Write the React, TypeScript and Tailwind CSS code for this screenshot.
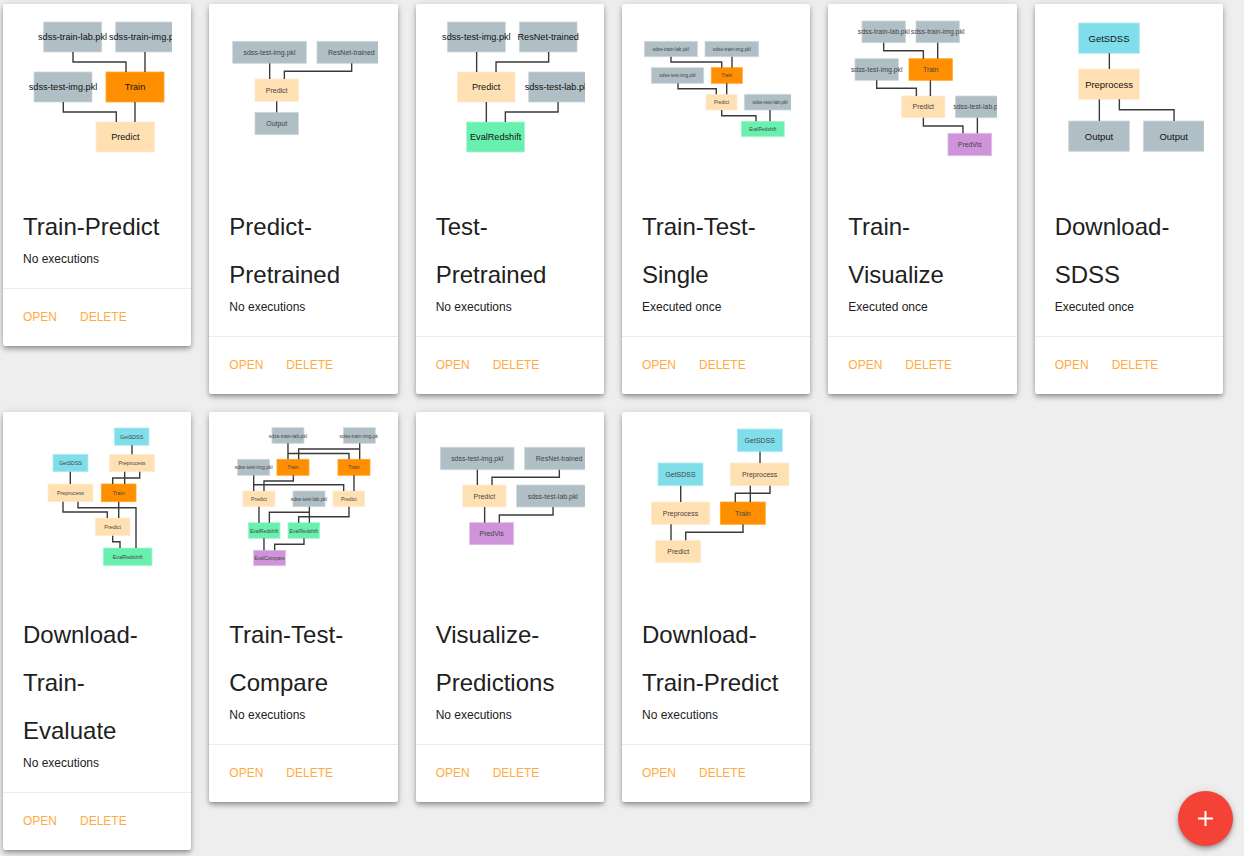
type Kind = 'data' | 'train' | 'step' | 'eval' | 'get' | 'vis';

interface GraphNode {
    x1: number;
    x2: number;
    y1: number;
    y2: number;
    label: string;
    kind: Kind;
    tx?: number; // label centre, where it is not the middle of the box
}

interface Workflow {
    title: string;
    status: string;
    font: number;
    nodes: GraphNode[];
    edges: string[];
}

const kindClass: Record<Kind, string> = {
    data: 'fill-[#b0bec5] stroke-[#cfd8dc]',
    train: 'fill-[#ff8f00] stroke-[#ffa726]',
    step: 'fill-[#ffe0b2] stroke-[#ffecd0]',
    eval: 'fill-[#69f0ae] stroke-[#a5f6ce]',
    get: 'fill-[#80deea] stroke-[#b2ebf2]',
    vis: 'fill-[#ce93d8] stroke-[#e1bee7]',
};

const n = (x1: number, x2: number, y1: number, y2: number, label: string, kind: Kind, tx?: number): GraphNode => ({
    x1, x2, y1, y2, label, kind, tx,
});

// coordinates are page pixels, the viewBox of each card shifts them into place
const workflows: Workflow[] = [
    {
        title: 'Train-Predict',
        status: 'No executions',
        font: 9.13,
        nodes: [
            n(43.7, 101.7, 22, 52, 'sdss-train-lab.pkl', 'data', 72.5),
            n(115.7, 173.7, 22, 52, 'sdss-train-img.pkl', 'data'),
            n(34, 92, 72, 102, 'sdss-test-img.pkl', 'data'),
            n(106, 164, 72, 102, 'Train', 'train'),
            n(96, 154.7, 122, 152, 'Predict', 'step'),
        ],
        edges: [
            '73,52 73,62 126,62 126,72',
            '145,52 145,72',
            '63.3,102 63.3,112 116.3,112 116.3,122',
            '135,102 135,122',
        ],
    },
    {
        title: 'Predict-Pretrained',
        status: 'No executions',
        font: 6.94,
        nodes: [
            n(233, 306.7, 41.3, 63.3, 'sdss-test-img.pkl', 'data'),
            n(317.3, 391, 41.3, 63.3, 'ResNet-trained', 'data', 351.7),
            n(255.3, 298.7, 79, 101.3, 'Predict', 'step'),
            n(255.3, 298.7, 112.3, 134.7, 'Output', 'data'),
        ],
        edges: [
            '270,63.3 270,79',
            '352,63.3 352,71.3 284.7,71.3 284.7,79',
            '277,101.3 277,112.3',
        ],
    },
    {
        title: 'Test-Pretrained',
        status: 'No executions',
        font: 9.13,
        nodes: [
            n(447, 505, 22, 52, 'sdss-test-img.pkl', 'data'),
            n(519, 576.7, 22, 52, 'ResNet-trained', 'data'),
            n(457, 514.7, 72, 102, 'Predict', 'step'),
            n(528.3, 586.3, 72, 102, 'sdss-test-lab.pkl', 'data'),
            n(466.3, 524.3, 122, 152, 'EvalRedshift', 'eval'),
        ],
        edges: [
            '476.3,52 476.3,72',
            '548.3,52 548.3,62 495.7,62 495.7,72',
            '486,102 486,122',
            '557.7,102 557.7,112 505,112 505,122',
        ],
    },
    {
        title: 'Train-Test-Single',
        status: 'Executed once',
        font: 4.85,
        nodes: [
            n(644.3, 697.3, 41.3, 56.7, 'sdss-train-lab.pkl', 'data'),
            n(705, 758.7, 41.3, 56.7, 'sdss-train-img.pkl', 'data'),
            n(651.3, 703.7, 67.7, 83.3, 'sdss-test-img.pkl', 'data'),
            n(711.3, 742.3, 67.7, 83.3, 'Train', 'train'),
            n(706, 737, 94.3, 110, 'Predict', 'step'),
            n(744.3, 796, 94.3, 110, 'sdss-test-lab.pkl', 'data', 770),
            n(741.3, 784.3, 121.3, 136.7, 'EvalRedshift', 'eval'),
        ],
        edges: [
            '671,56.7 671,62 721.7,62 721.7,67.7',
            '732,56.7 732,67.7',
            '678,83.3 678,88.7 716.3,88.7 716.3,94.3',
            '726.7,83.3 726.7,94.3',
            '721.7,110 721.7,115.7 756,115.7 756,121.3',
            '770,110 770,121.3',
        ],
    },
    {
        title: 'Train-Visualize',
        status: 'Executed once',
        font: 6.88,
        nodes: [
            n(862.3, 905.7, 21, 42.7, 'sdss-train-lab.pkl', 'data'),
            n(916.3, 959.7, 21, 42.7, 'sdss-train-img.pkl', 'data'),
            n(855.3, 898.7, 58.7, 80.3, 'sdss-test-img.pkl', 'data'),
            n(909.3, 952.7, 58.7, 80.3, 'Train', 'train'),
            n(902, 945.3, 96, 117.7, 'Predict', 'step'),
            n(955.7, 1001, 96, 117.7, 'sdss-test-lab.pkl', 'data', 978.4),
            n(948.3, 992, 133.3, 155.7, 'PredVis', 'vis'),
        ],
        edges: [
            '884,42.7 884,50.7 923.7,50.7 923.7,58.7',
            '938,42.7 938,58.7',
            '877,80.3 877,88.3 916.7,88.3 916.7,96',
            '930.7,80.3 930.7,96',
            '923.7,117.7 923.7,126 963.3,126 963.3,133.3',
            '977.7,117.7 977.7,133.3',
        ],
    },
    {
        title: 'Download-SDSS',
        status: 'Executed once',
        font: 9.45,
        nodes: [
            n(1078.3, 1139, 23, 53.3, 'GetSDSS', 'get'),
            n(1078.3, 1139, 69, 99.3, 'Preprocess', 'step'),
            n(1068.3, 1129, 121, 151.3, 'Output', 'data'),
            n(1143, 1203.7, 121, 151.3, 'Output', 'data'),
        ],
        edges: [
            '1109,53.3 1109,69',
            '1099,99.3 1099,121',
            '1119,99.3 1119,109.7 1173.7,109.7 1173.7,121',
        ],
    },
    {
        title: 'Download-Train-Evaluate',
        status: 'No executions',
        font: 5.35,
        nodes: [
            n(114.3, 149, 428, 445.3, 'GetSDSS', 'get'),
            n(109.3, 154.7, 454.3, 471.7, 'Preprocess', 'step'),
            n(53, 88, 454.3, 471.7, 'GetSDSS', 'get'),
            n(48, 93, 484, 501.7, 'Preprocess', 'step'),
            n(101.3, 136, 484, 501.7, 'Train', 'train'),
            n(95.3, 130, 518, 535.7, 'Predict', 'step'),
            n(103.3, 152, 548, 565.7, 'EvalRedshift', 'eval'),
        ],
        edges: [
            '132,445.3 132,454.3',
            '70.3,471.7 70.3,484',
            '139.7,471.7 139.7,478 112.7,478 112.7,484',
            '124.7,471.7 124.7,484',
            '63,501.7 63,512 107.3,512 107.3,518',
            '78,501.7 78,507.7 136,507.7 136,548',
            '118.7,501.7 118.7,518',
            '112.7,535.7 112.7,541.7 120,541.7 120,548',
        ],
    },
    {
        title: 'Train-Test-Compare',
        status: 'No executions',
        font: 5.07,
        nodes: [
            n(272.3, 304.3, 427.7, 443.3, 'sdss-train-lab.pkl', 'data'),
            n(343.7, 375.7, 427.7, 443.3, 'sdss-train-img.pkl', 'data'),
            n(238, 270, 459.3, 475.3, 'sdss-test-img.pkl', 'data'),
            n(277.3, 309.3, 459.3, 475.3, 'Train', 'train'),
            n(338.3, 370.3, 459.3, 475.3, 'Train', 'train'),
            n(243.3, 275.3, 491, 506.7, 'Predict', 'step'),
            n(293.3, 325.3, 491, 506.7, 'sdss-test-lab.pkl', 'data'),
            n(333.3, 365, 491, 506.7, 'Predict', 'step'),
            n(248.7, 280.3, 522.7, 538.3, 'EvalRedshift', 'eval'),
            n(288.3, 320, 522.7, 538.3, 'EvalRedshift', 'eval'),
            n(254, 285.7, 550.3, 565.7, 'EvalCompare', 'vis'),
        ],
        edges: [
            '288.3,443.3 288.3,459.3',
            '288.3,453.5 349.3,453.5 349.3,459.3',
            '360,443.3 360,459.3',
            '360,449 299,449 299,459.3',
            '254,475.3 254,491',
            '254,484.7 344,484.7 344,491',
            '293.7,475.3 293.7,481 264.3,481 264.3,491',
            '354.3,475.3 354.3,491',
            '259.3,506.7 259.3,522.7',
            '309.7,506.7 309.7,522.7',
            '309.7,512.3 269.7,512.3 269.7,522.7',
            '349.3,506.7 349.3,516.7 299,516.7 299,522.7',
            '264.3,538.3 264.3,550.3',
            '304.3,538.3 304.3,544.3 275,544.3 275,550.3',
        ],
    },
    {
        title: 'Visualize-Predictions',
        status: 'No executions',
        font: 6.94,
        nodes: [
            n(440, 513.7, 447.3, 469.7, 'sdss-test-img.pkl', 'data'),
            n(524.3, 593, 447.3, 469.7, 'ResNet-trained', 'data', 558.8),
            n(462.3, 505.7, 485, 507, 'Predict', 'step'),
            n(516.3, 589, 485, 507, 'sdss-test-lab.pkl', 'data', 552.5),
            n(469.3, 513.3, 522.7, 544.7, 'PredVis', 'vis'),
        ],
        edges: [
            '477,469.7 477,485',
            '559,469.7 559,477.3 491.7,477.3 491.7,485',
            '484.3,507 484.3,522.7',
            '552.7,507 552.7,515 499,515 499,522.7',
        ],
    },
    {
        title: 'Download-Train-Predict',
        status: 'No executions',
        font: 7,
        nodes: [
            n(737.3, 782.3, 429, 451.7, 'GetSDSS', 'get'),
            n(730.3, 789, 463, 485.7, 'Preprocess', 'step'),
            n(658, 703, 463, 485.7, 'GetSDSS', 'get'),
            n(651.3, 709.7, 502, 524.3, 'Preprocess', 'step'),
            n(720.3, 765.3, 502, 524.3, 'Train', 'train'),
            n(655.7, 700.7, 540.3, 562.7, 'Predict', 'step'),
        ],
        edges: [
            '760,451.7 760,463',
            '680.7,485.7 680.7,502',
            '770,485.7 770,493.3 735.3,493.3 735.3,502',
            '750.3,485.7 750.3,502',
            '671,524.3 671,540.3',
            '743,524.3 743,532.3 685.7,532.3 685.7,540.3',
        ],
    },
];

function WorkflowGraph({ flow, index }: { flow: Workflow; index: number }) {
    const left = 23 + 206.33 * (index % 6);
    const top = index < 6 ? 4 : 412;

    return (
        <svg viewBox={`${left} ${top} 149 199`} className="ml-[20px] h-[199px] w-[149px]">
            {flow.nodes.map((node, i) => (
                <rect
                    key={i}
                    x={node.x1}
                    y={node.y1}
                    width={node.x2 - node.x1}
                    height={node.y2 - node.y1}
                    strokeWidth={0.8}
                    className={kindClass[node.kind]}
                />
            ))}
            {flow.edges.map((points, i) => (
                <polyline key={i} points={points} fill="none" stroke="#3a3a3a" strokeWidth={1.4} />
            ))}
            {flow.nodes.map((node, i) => (
                <text
                    key={i}
                    x={node.tx ?? (node.x1 + node.x2) / 2}
                    y={(node.y1 + node.y2) / 2}
                    textAnchor="middle"
                    dominantBaseline="central"
                    fontSize={flow.font}
                    className={flow.font < 8 ? 'fill-[#444444]' : 'fill-[#111111]'}
                >
                    {node.label}
                </text>
            ))}
        </svg>
    );
}

export default function App() {
    return (
        <div className="relative h-[856px] overflow-hidden bg-[#eeeeee] font-['Liberation_Sans',Arial,sans-serif] text-[#212121]">
            <div className="grid grid-cols-6 items-start gap-x-[18px] gap-y-[18px] pl-[3px] pr-[21px] pt-[4px]">
                {workflows.map((flow, index) => (
                    <div
                        key={flow.title}
                        className="rounded-[2px] bg-white shadow-[0_4px_5px_0_rgba(0,0,0,0.14),0_1px_10px_0_rgba(0,0,0,0.12),0_2px_4px_-1px_rgba(0,0,0,0.3)]"
                    >
                        <WorkflowGraph flow={flow} index={index} />
                        <div className="px-[20px] pb-[20px]">
                            <h2 className="text-[24px] leading-[48px]">{flow.title}</h2>
                            <p className="-mt-[2px] h-[19px] text-[12px] leading-[20px]">{flow.status}</p>
                        </div>
                        <div className="flex h-[58px] items-center gap-[23px] border-t border-[#ececec] px-[20px] pb-[2px] text-[12px] uppercase text-[#ffab40]">
                            <a>Open</a>
                            <a>Delete</a>
                        </div>
                    </div>
                ))}
            </div>
            <button className="absolute bottom-[10px] right-[11px] flex h-[55px] w-[55px] items-center justify-center rounded-full bg-[#f44336] shadow-[0_4px_5px_0_rgba(0,0,0,0.14),0_1px_10px_0_rgba(0,0,0,0.12),0_2px_4px_-1px_rgba(0,0,0,0.3)]">
                <svg viewBox="0 0 15 15" className="h-[15px] w-[15px]">
                    <path d="M6.5 0h2v6.500H15v2H8.500V15h-2V8.500H0v-2h6.500z" fill="#fff" />
                </svg>
            </button>
        </div>
    );
}
